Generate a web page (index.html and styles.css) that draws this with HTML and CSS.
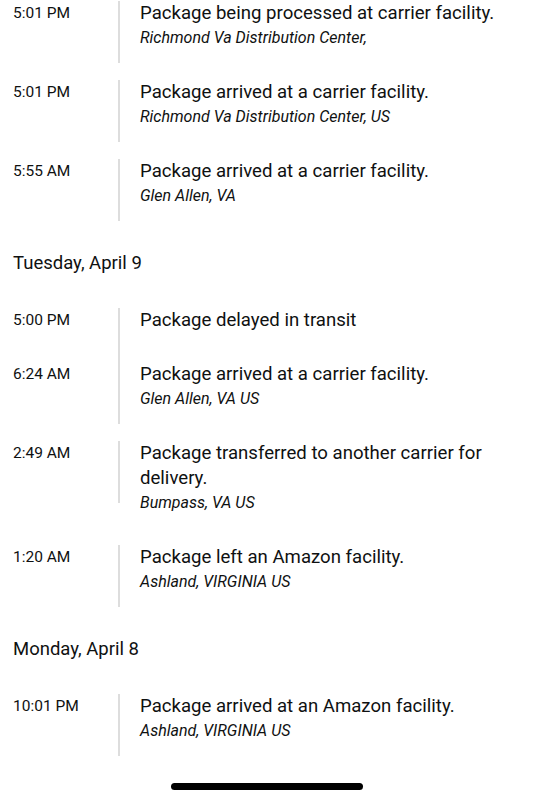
FILE: index.html
```html
<!DOCTYPE html>
<html lang="en">
<head>
<meta charset="utf-8">
<title>Tracking</title>
<link rel="stylesheet" href="styles.css">
</head>
<body>
<main class="timeline">
  <div class="event">
    <div class="time">5:01 PM</div>
    <div class="rule"></div>
    <div class="info">
      <div class="title">Package being processed at carrier facility.</div>
      <div class="place">Richmond Va Distribution Center,</div>
    </div>
  </div>
  <div class="event">
    <div class="time">5:01 PM</div>
    <div class="rule"></div>
    <div class="info">
      <div class="title">Package arrived at a carrier facility.</div>
      <div class="place">Richmond Va Distribution Center, US</div>
    </div>
  </div>
  <div class="event">
    <div class="time">5:55 AM</div>
    <div class="rule"></div>
    <div class="info">
      <div class="title">Package arrived at a carrier facility.</div>
      <div class="place">Glen Allen, VA</div>
    </div>
  </div>

  <h2 class="day">Tuesday, April 9</h2>

  <div class="event event-single">
    <div class="time">5:00 PM</div>
    <div class="rule"></div>
    <div class="info">
      <div class="title">Package delayed in transit</div>
    </div>
  </div>
  <div class="event">
    <div class="time">6:24 AM</div>
    <div class="rule"></div>
    <div class="info">
      <div class="title">Package arrived at a carrier facility.</div>
      <div class="place">Glen Allen, VA US</div>
    </div>
  </div>
  <div class="event">
    <div class="time">2:49 AM</div>
    <div class="rule"></div>
    <div class="info">
      <div class="title">Package transferred to another carrier for delivery.</div>
      <div class="place">Bumpass, VA US</div>
    </div>
  </div>
  <div class="event">
    <div class="time">1:20 AM</div>
    <div class="rule"></div>
    <div class="info">
      <div class="title">Package left an Amazon facility.</div>
      <div class="place">Ashland, VIRGINIA US</div>
    </div>
  </div>

  <h2 class="day">Monday, April 8</h2>

  <div class="event">
    <div class="time">10:01 PM</div>
    <div class="rule"></div>
    <div class="info">
      <div class="title">Package arrived at an Amazon facility.</div>
      <div class="place">Ashland, VIRGINIA US</div>
    </div>
  </div>
</main>
<div class="home-bar"><span class="home-indicator"></span></div>
</body>
</html>
```
FILE: styles.css
```css
* { box-sizing: border-box; }

html, body {
  margin: 0;
  padding: 0;
  background: #ffffff;
}

body {
  font-family: Roboto, "Noto Sans", Arial, sans-serif;
  color: #0f1111;
  width: 533px;
  height: 800px;
  overflow: hidden;
}

.timeline {
  display: flex;
  flex-direction: column;
  padding: 1px 13px 0;
}

.event {
  display: flex;
  align-items: flex-start;
  padding-bottom: 30px;
}

.event-single {
  padding-bottom: 29px;
}

.time {
  width: 105px;
  flex: none;
  font-size: 15.5px;
  line-height: 25px;
}

.rule {
  flex: none;
  width: 2px;
  height: 62px;
  margin-bottom: -62px;
  background: #dddddd;
}

.info {
  flex: 1;
  min-width: 0;
  padding-left: 20px;
}

.title {
  font-size: 18.6px;
  line-height: 25px;
}

.place {
  font-size: 16px;
  font-style: italic;
  line-height: 24px;
}

.day {
  margin: 0;
  padding: 13px 0 32px;
  font-size: 18.5px;
  font-weight: 400;
  line-height: 25px;
}

.home-bar {
  display: flex;
  justify-content: center;
  padding-top: 10px;
}

.home-indicator {
  display: block;
  width: 192px;
  height: 7px;
  border-radius: 4px;
  background: #000000;
}
```
